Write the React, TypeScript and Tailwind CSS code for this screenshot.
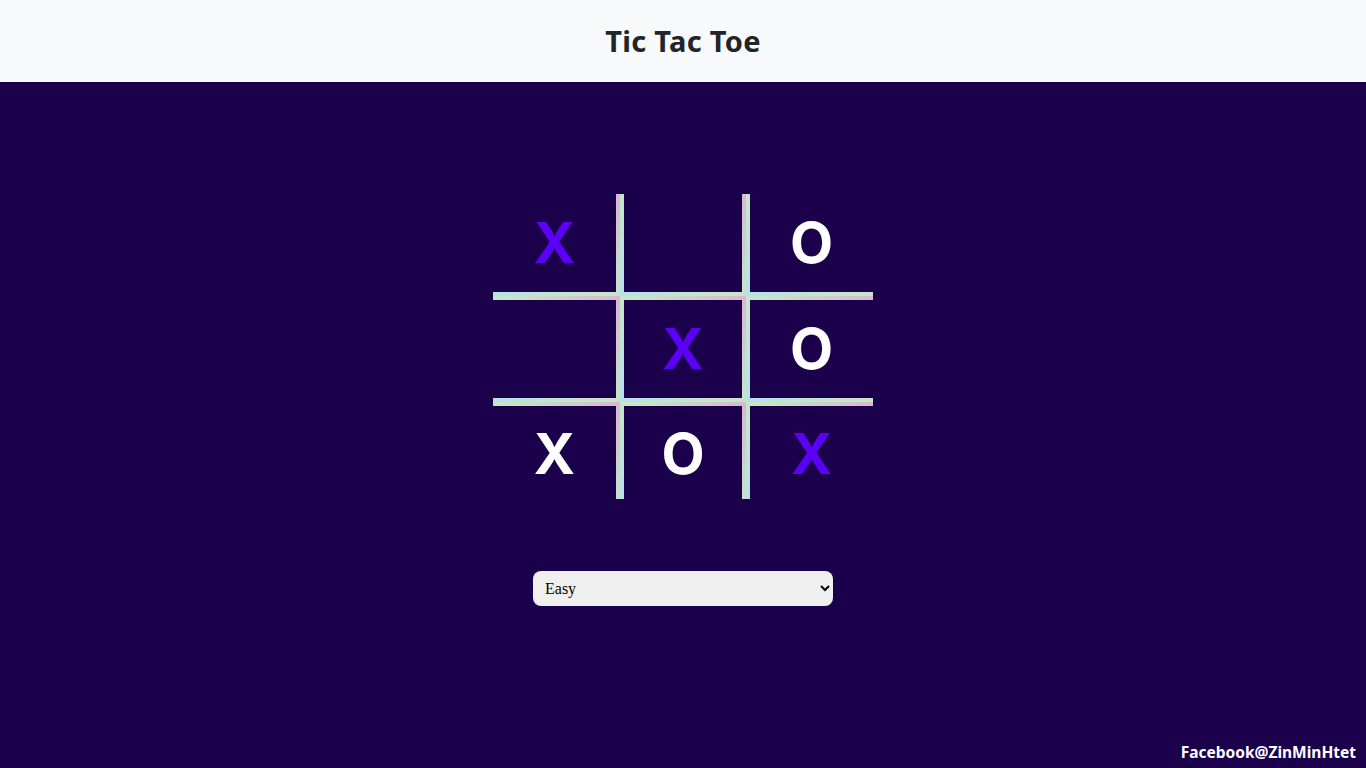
import React from "react";

const board: (string | null)[] = ["X", null, "O", null, "X", "O", "X", "O", "X"];
const purple = new Set([0, 4, 8]);

const cellBorders = [
  "border-r-4 border-b-4",
  "border-l-4 border-r-4 border-b-4",
  "border-l-4 border-b-4",
  "border-t-4 border-r-4 border-b-4",
  "border-4",
  "border-t-4 border-l-4 border-b-4",
  "border-t-4 border-r-4",
  "border-t-4 border-l-4 border-r-4",
  "border-t-4 border-l-4",
];

const heights = [102, 102, 102, 106, 106, 106, 100, 100, 100];

export default function App() {
  return (
    <div className="min-h-screen flex flex-col bg-[#1b004b] font-['Noto_Sans',sans-serif]">
      <header className="h-[82px] bg-[#f8f9fa] flex items-center justify-center">
        <h1 className="text-[29px] font-bold text-[#212529] tracking-[0.3px]">Tic Tac Toe</h1>
      </header>
      <main className="flex-1 flex flex-col items-center">
        <div className="mt-[112px] w-[380px] h-[305px] overflow-hidden grid grid-cols-3 content-start">
          {board.map((v, i) => (
            <div
              key={i}
              className={`${cellBorders[i]} border-solid [border-image:linear-gradient(45deg,#b8e0ec,#c6e8c4,#dab6d6)_1] flex items-center justify-center font-['Inter',sans-serif] font-bold text-[56px] leading-none ${purple.has(i) ? "text-[#5c00f6]" : "text-white"}`}
              style={{ height: heights[i] }}
            >
              {v}
            </div>
          ))}
        </div>
        <select className="mt-[72px] w-[300px] h-[35px] rounded-lg bg-[#efefef] text-black pl-2 pr-1 font-['Liberation_Serif',serif] text-base">
          <option>Easy</option>
          <option>Medium</option>
          <option>Hard</option>
        </select>
        <div className="mt-auto self-end pr-[10px] pb-[4px] text-white font-bold text-[15.5px]">
          Facebook@ZinMinHtet
        </div>
      </main>
    </div>
  );
}
